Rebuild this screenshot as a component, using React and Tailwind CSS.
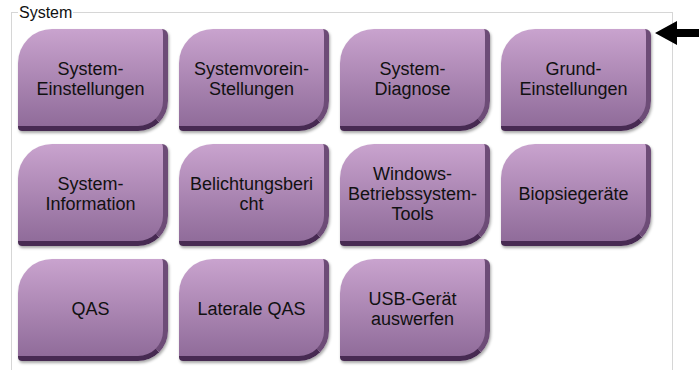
import React from "react";

const rows = [
  [["System-", "Einstellungen"], ["Systemvorein-", "Stellungen"], ["System-", "Diagnose"], ["Grund-", "Einstellungen"]],
  [["System-", "Information"], ["Belichtungsberi", "cht"], ["Windows-", "Betriebssystem-", "Tools"], ["Biopsiegeräte"]],
  [["QAS"], ["Laterale QAS"], ["USB-Gerät", "auswerfen"]],
];

function Btn({ lines }) {
  return (
    <div className="w-[150px] h-[102px] rounded-tl-[34px] rounded-br-[30px] rounded-tr-[6px] rounded-bl-[4px] bg-gradient-to-b from-[#c9a3ce] to-[#906c9a] border-r-[5px] border-b-[5px] border-r-[#6d4c77] border-b-[#472a52] shadow-[1px_2px_3px_rgba(0,0,0,0.35)] flex flex-col items-center justify-center pt-[3px] text-[18px] leading-[20px] text-[#111] text-center">
      {lines.map((l, i) => (
        <span key={i}>{l}</span>
      ))}
    </div>
  );
}

export default function App() {
  return (
    <div className="relative w-[699px] h-[370px] bg-white overflow-hidden" style={{ fontFamily: '"Liberation Sans", Arial, sans-serif' }}>
      <fieldset className="ml-[11px] mt-[4px] w-[662px] h-[400px] border border-[#d6d6d6] pl-[6px] pt-[8px]">
        <legend className="ml-0 px-[1px] text-[16px] leading-[17px] text-[#111]">System</legend>
        <div className="grid grid-cols-[repeat(4,150px)] gap-x-[11px] gap-y-[13px]">
          {rows.flat().map((lines, i) => (
            <Btn key={i} lines={lines} />
          ))}
        </div>
      </fieldset>
      <svg className="absolute left-[655px] top-[21px]" width="44" height="24" viewBox="0 0 44 24">
        <polygon points="0,12 22,0 22,8 44,8 44,16 22,16 22,24" fill="#000" />
      </svg>
    </div>
  );
}
